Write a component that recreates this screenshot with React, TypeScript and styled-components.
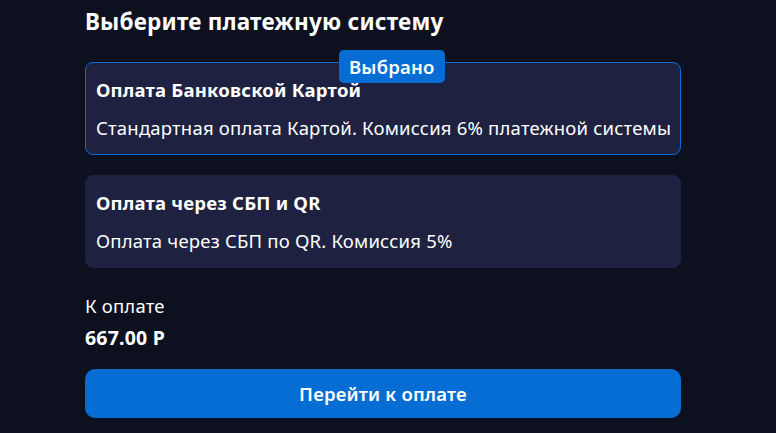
import React from 'react';
import styled, { createGlobalStyle } from 'styled-components';

const GlobalStyle = createGlobalStyle`
  html, body {
    margin: 0;
    padding: 0;
    background: #0c101f;
  }
  body {
    font-family: 'Noto Sans', 'Open Sans', sans-serif;
    color: #ffffff;
    letter-spacing: 0.2px;
  }
`;

const Page = styled.div`
  display: flex;
  flex-direction: column;
  width: 596px;
  margin-left: 85px;
`;

const Heading = styled.h2`
  margin: 6px 0 24px;
  font-size: 22.5px;
  line-height: 32px;
  font-weight: 700;
`;

const Methods = styled.div`
  display: flex;
  flex-direction: column;
  gap: 20px;
`;

const MethodCard = styled.div<{ $selected?: boolean }>`
  position: relative;
  display: flex;
  flex-direction: column;
  gap: 12px;
  padding: 14px 10px 13px;
  border-radius: 8px;
  background: #1e2240;
  border: 1px solid ${(p) => (p.$selected ? '#0a6dd6' : '#1e2240')};
  cursor: pointer;
`;

const Badge = styled.span`
  position: absolute;
  top: -13px;
  left: 253px;
  padding: 0 10px;
  height: 33px;
  line-height: 33px;
  border-radius: 5px;
  background: #066dd4;
  font-size: 18.5px;
  font-weight: 600;
`;

const MethodTitle = styled.div`
  font-size: 18.5px;
  line-height: 26px;
  font-weight: 700;
  white-space: nowrap;
`;

const MethodText = styled.div`
  font-size: 18.5px;
  line-height: 26px;
  white-space: nowrap;
`;

const Summary = styled.div`
  display: flex;
  flex-direction: column;
  gap: 6px;
  margin-top: 25px;
`;

const SummaryLabel = styled.div`
  font-size: 18.5px;
  line-height: 26px;
`;

const SummaryValue = styled.div`
  font-size: 19.5px;
  line-height: 26px;
  font-weight: 700;
`;

const PayButton = styled.button`
  margin-top: 18px;
  height: 49px;
  border: none;
  border-radius: 10px;
  background: #066dd4;
  color: #ffffff;
  font-family: inherit;
  font-size: 18.5px;
  letter-spacing: 0.2px;
  font-weight: 600;
  cursor: pointer;
`;

const methods = [
  {
    id: 'card',
    title: 'Оплата Банковской Картой',
    text: 'Стандартная оплата Картой. Комиссия 6% платежной системы',
  },
  {
    id: 'sbp',
    title: 'Оплата через СБП и QR',
    text: 'Оплата через СБП по QR. Комиссия 5%',
  },
];

export default function App() {
  const [selected, setSelected] = React.useState('card');

  return (
    <>
      <GlobalStyle />
      <Page>
        <Heading>Выберите платежную систему</Heading>
        <Methods>
          {methods.map((m) => (
            <MethodCard key={m.id} $selected={selected === m.id} onClick={() => setSelected(m.id)}>
              {selected === m.id && <Badge>Выбрано</Badge>}
              <MethodTitle>{m.title}</MethodTitle>
              <MethodText>{m.text}</MethodText>
            </MethodCard>
          ))}
        </Methods>
        <Summary>
          <SummaryLabel>К оплате</SummaryLabel>
          <SummaryValue>667.00 Р</SummaryValue>
        </Summary>
        <PayButton>Перейти к оплате</PayButton>
      </Page>
    </>
  );
}
